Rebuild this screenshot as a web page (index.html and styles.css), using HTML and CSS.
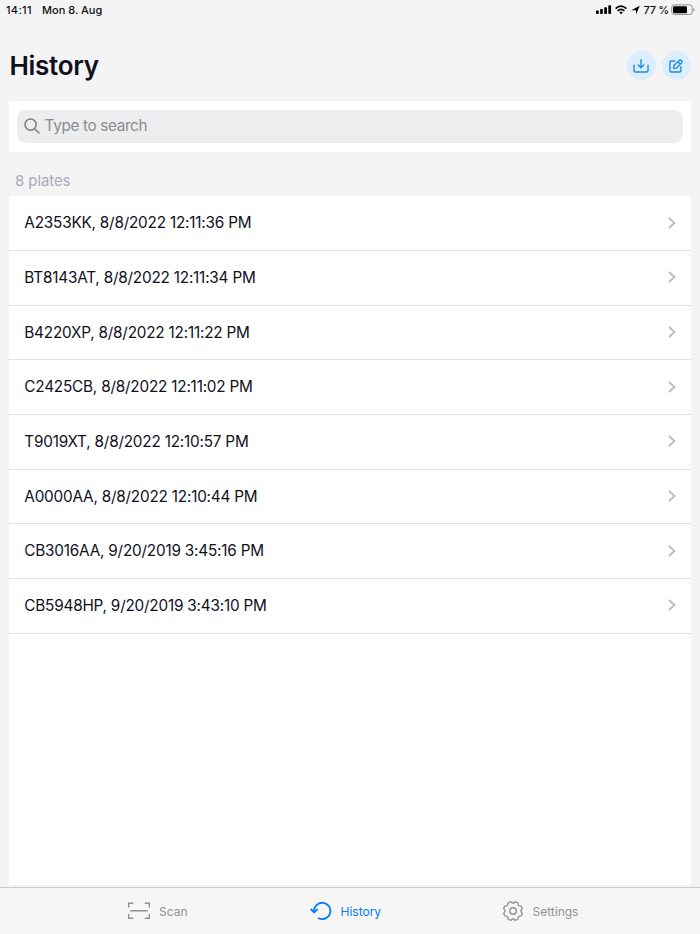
FILE: index.html
```html
<!DOCTYPE html>
<html lang="en">
<head>
    <meta charset="UTF-8">
    <meta name="viewport" content="width=device-width, initial-scale=1.0">
    <title>History</title>
    <link rel="stylesheet" href="styles.css">
</head>
<body>
    <div class="status-bar">
        <span class="time">14:11</span>
        <span class="date">Mon 8. Aug</span>
        <div class="status-icons">
            <svg class="signal" width="16" height="10" viewBox="0 0 16 10">
                <rect x="0" y="5.5" width="2.8" height="3.5" rx="0.8"/>
                <rect x="4.1" y="4" width="2.8" height="5" rx="0.8"/>
                <rect x="8.2" y="2.2" width="2.8" height="6.8" rx="0.8"/>
                <rect x="12.3" y="0.2" width="2.8" height="8.8" rx="0.8"/>
            </svg>
            <svg class="wifi" width="12" height="10" viewBox="0 0 12 10">
                <g fill="none" stroke="#000" stroke-width="1.7">
                    <path d="M0.6 3.6Q6 -1.4 11.4 3.6"/>
                    <path d="M2.6 5.9Q6 2.8 9.4 5.9"/>
                </g>
                <path d="M4.2 7.3Q6 5.9 7.8 7.3L6 9.2z"/>
            </svg>
            <svg class="location" width="9" height="10" viewBox="0 0 9 10">
                <path d="M8.8 0.8L5 9.4V5.200H0.3z"/>
            </svg>
            <span class="percent">77 %</span>
            <svg class="battery" width="24" height="12" viewBox="0 0 24 12">
                <rect x="0.7" y="0.9" width="20.6" height="9.6" rx="2.6" fill="none" stroke="#8e8e8e"/>
                <rect x="2" y="2.2" width="14" height="7" rx="1.2"/>
                <path d="M22.4 4v3.6q1.3-.5 1.3-1.8T22.4 4z" fill="#8e8e8e"/>
            </svg>
        </div>
    </div>

    <header class="header">
        <h1>History</h1>
        <button class="round-button" aria-label="Export">
            <svg width="16" height="16" viewBox="0 0 16 16">
                <path d="M1 7.2v5.2q0 1.6 1.6 1.6h10.8q1.6 0 1.6-1.6V7.2M8 1.6v7.8M5.2 7L8 9.8 10.8 7"/>
            </svg>
        </button>
        <button class="round-button" aria-label="Edit">
            <svg width="16" height="16" viewBox="0 0 16 16">
                <path d="M6.8 3H3.4Q1.9 3 1.9 4.5v8Q1.9 14 3.4 14h8q1.5 0 1.5-1.5V8.8"/>
                <path d="M6 7.6l5-5q1.3-1.2 2.5 0t0 2.5l-5 5L5.7 10.4zM10 3.7l2.4 2.4"/>
            </svg>
        </button>
    </header>

    <div class="search">
        <label class="search-field">
            <svg width="16" height="16" viewBox="0 0 16 16">
                <circle cx="6.6" cy="6.6" r="5.6"/>
                <path d="M10.7 10.7l4.3 4.3"/>
            </svg>
            <input type="text" placeholder="Type to search">
        </label>
    </div>

    <p class="count">8 plates</p>

    <ul class="plates">
        <li><span>A2353KK, 8/8/2022 12:11:36 PM</span><svg width="8" height="12" viewBox="0 0 8 12"><path d="M1 1l5.5 5L1 11"/></svg></li>
        <li><span>BT8143AT, 8/8/2022 12:11:34 PM</span><svg width="8" height="12" viewBox="0 0 8 12"><path d="M1 1l5.5 5L1 11"/></svg></li>
        <li><span>B4220XP, 8/8/2022 12:11:22 PM</span><svg width="8" height="12" viewBox="0 0 8 12"><path d="M1 1l5.5 5L1 11"/></svg></li>
        <li><span>C2425CB, 8/8/2022 12:11:02 PM</span><svg width="8" height="12" viewBox="0 0 8 12"><path d="M1 1l5.5 5L1 11"/></svg></li>
        <li><span>T9019XT, 8/8/2022 12:10:57 PM</span><svg width="8" height="12" viewBox="0 0 8 12"><path d="M1 1l5.5 5L1 11"/></svg></li>
        <li><span>A0000AA, 8/8/2022 12:10:44 PM</span><svg width="8" height="12" viewBox="0 0 8 12"><path d="M1 1l5.5 5L1 11"/></svg></li>
        <li><span>CB3016AA, 9/20/2019 3:45:16 PM</span><svg width="8" height="12" viewBox="0 0 8 12"><path d="M1 1l5.5 5L1 11"/></svg></li>
        <li><span>CB5948HP, 9/20/2019 3:43:10 PM</span><svg width="8" height="12" viewBox="0 0 8 12"><path d="M1 1l5.5 5L1 11"/></svg></li>
    </ul>

    <nav class="tabs">
        <a class="tab scan">
            <svg width="24" height="20" viewBox="0 0 24 20">
                <path d="M1.7 6.5V2.3h4.5M17.8 2.3h4.5v4.2M22.3 13v4.2h-4.5M6.2 17.2H1.7V13M3.2 9.7h17.6"/>
            </svg>
            <span>Scan</span>
        </a>
        <a class="tab history active">
            <svg width="22" height="20" viewBox="0 0 22 20">
                <path d="M4.1 11A8.200 8.200 0 1 1 8 17M0.700 8l3.400 3.400L7.700 8.200"/>
            </svg>
            <span>History</span>
        </a>
        <a class="tab settings">
            <svg width="22" height="22" viewBox="-11 -11 22 22">
                <defs>
                    <path id="tooth" d="M-2.98-7.2C-1.9-7.65-2.3-9.5-1-9.5H1C2.3-9.5 1.9-7.65 2.98-7.2"/>
                </defs>
                <use href="#tooth" transform="rotate(22.5)"/>
                <use href="#tooth" transform="rotate(67.5)"/>
                <use href="#tooth" transform="rotate(112.5)"/>
                <use href="#tooth" transform="rotate(157.5)"/>
                <use href="#tooth" transform="rotate(202.5)"/>
                <use href="#tooth" transform="rotate(247.5)"/>
                <use href="#tooth" transform="rotate(292.5)"/>
                <use href="#tooth" transform="rotate(337.5)"/>
                <circle r="3.3"/>
            </svg>
            <span>Settings</span>
        </a>
    </nav>
</body>
</html>
```
FILE: styles.css
```css
* {
    box-sizing: border-box;
}
body {
    margin: 0;
    height: 100vh;
    display: flex;
    flex-direction: column;
    overflow: hidden;
    background: #f4f4f4;
    color: #10101c;
    font-family: Inter, "Liberation Sans", sans-serif;
}
svg {
    flex: none;
}
.status-bar {
    display: flex;
    align-items: center;
    height: 19px;
    padding: 0 5px 0 6px;
    font-size: 11px;
    font-weight: 500;
    color: #111;
}
.time {
    width: 27px;
    letter-spacing: 0.3px;
}
.date {
    margin-left: 9px;
}
.status-icons {
    display: flex;
    align-items: center;
    margin-left: auto;
}
.wifi {
    margin-left: 3px;
}
.location {
    margin-left: 4px;
}
.percent {
    margin: 0 2px 0 4px;
    letter-spacing: -0.3px;
}
.header {
    display: flex;
    align-items: center;
    gap: 6px;
    height: 81px;
    padding: 12px 9.5px 0;
}
.header h1 {
    margin: 0 auto 0 0;
    font-size: 26px;
    font-weight: 600;
    letter-spacing: -0.3px;
}
.round-button {
    display: flex;
    align-items: center;
    justify-content: center;
    width: 29px;
    height: 29px;
    padding: 0;
    border: none;
    border-radius: 50%;
    background: #dcedfe;
}
.round-button svg {
    fill: none;
    stroke: #1a8aef;
    stroke-width: 1.4;
    stroke-linecap: round;
    stroke-linejoin: round;
}
.search {
    height: 51.5px;
    margin: 0.5px 9.3px 0;
    padding: 9px 7.3px;
    background: #fff;
}
.search-field {
    display: flex;
    align-items: center;
    height: 33px;
    padding-left: 7px;
    border-radius: 9px;
    background: #ededef;
}
.search-field svg {
    fill: none;
    stroke: #7d7d80;
    stroke-width: 1.5;
    stroke-linecap: round;
}
.search-field input {
    flex: 1;
    margin-left: 5px;
    padding: 0 0 2px;
    border: none;
    outline: none;
    background: none;
    font: 15.3px Inter, "Liberation Sans", sans-serif;
    letter-spacing: -0.35px;
}
.search-field input::placeholder {
    color: #8b8b8e;
}
.count {
    height: 44.3px;
    margin: 0;
    padding: 14px 15px 0;
    font-size: 15px;
    line-height: 30px;
    letter-spacing: -0.1px;
    color: #a9a8ba;
}
.plates {
    flex: 1;
    margin: 0 9.3px 2px;
    padding: 0;
    list-style: none;
    background: #fff;
}
.plates li {
    display: flex;
    align-items: center;
    justify-content: space-between;
    height: 54.7px;
    padding: 0 15px 1px;
    border-bottom: 1px solid #e2e2e4;
    font-size: 15.3px;
    letter-spacing: -0.2px;
}
.plates svg {
    fill: none;
    stroke: #bababc;
    stroke-width: 1.7;
}
.tabs {
    display: flex;
    height: 47px;
    border-top: 1px solid #cbcbcd;
    background: #f6f6f6;
}
.tab {
    display: flex;
    align-items: center;
    font-size: 12px;
    color: #929292;
}
.tab svg {
    fill: none;
    stroke: currentColor;
    stroke-width: 1.4;
}
.tab.active {
    color: #087cf7;
}
.tab.active svg {
    stroke-width: 1.8;
}
.scan {
    margin-left: 127px;
    gap: 8px;
}
.history {
    width: 71px;
    margin-left: 122px;
    gap: 9px;
}
.settings {
    margin-left: 121px;
    gap: 9px;
}
```
